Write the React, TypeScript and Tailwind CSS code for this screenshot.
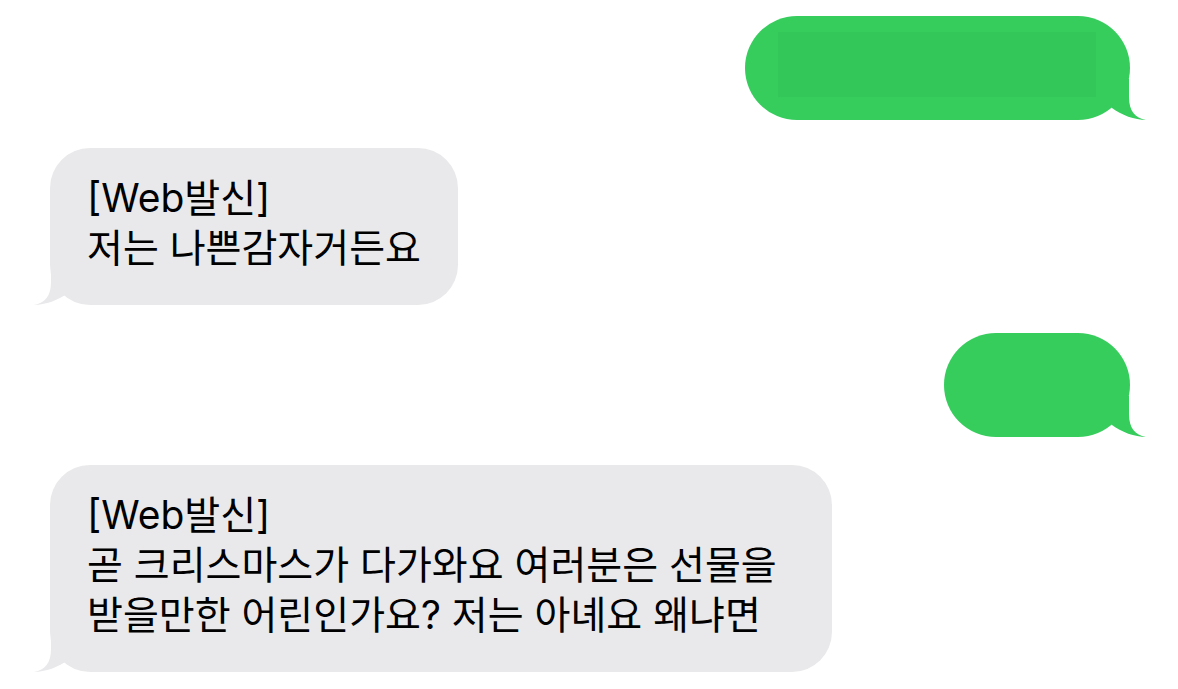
import React from 'react';

function Tail({ color, side }: { color: string; side: 'left' | 'right' }) {
  return (
    <svg
      width="58"
      height="43"
      viewBox="-40 -40 58 43"
      className={
        side === 'right'
          ? 'absolute right-[-17px] bottom-[-2px]'
          : 'absolute left-[-17px] bottom-[-2px] -scale-x-100'
      }
    >
      <path
        d="M-40,-40 H0 V-22 C0,-8 6,-1 17,1 C6,1 -8,-4 -17,-11 Z"
        fill={color}
      />
    </svg>
  );
}

function Sent({ width, children }: { width: string; children?: React.ReactNode }) {
  return (
    <div className={`relative self-end mr-[48px] h-[104px] rounded-[52px] bg-[#36cd5d] ${width}`}>
      <Tail color="#36cd5d" side="right" />
      {children}
    </div>
  );
}

function Received({ width, lines }: { width: string; lines: string[] }) {
  return (
    <div
      className={`relative self-start ml-[50px] rounded-[40px] bg-[#e9e9eb] pl-[37px] pt-[25px] pb-[32px] text-[39px] leading-[50px] text-black ${width}`}
    >
      <Tail color="#e9e9eb" side="left" />
      <div className="relative">
        {lines.map((l, i) => (
          <div key={i} className="whitespace-nowrap">
            {l}
          </div>
        ))}
      </div>
    </div>
  );
}

export default function App() {
  return (
    <div
      className="min-h-screen bg-white pt-[16px] flex flex-col gap-[28px]"
      style={{ fontFamily: 'Inter, "Noto Sans CJK KR", sans-serif' }}
    >
      <Sent width="w-[385px]">
        <div className="absolute left-[33px] top-[16px] w-[318px] h-[65px] bg-[#33c759]" />
      </Sent>
      <Received width="w-[408px]" lines={['[Web발신]', '저는 나쁜감자거든요']} />
      <Sent width="w-[186px]" />
      <Received
        width="w-[782px]"
        lines={[
          '[Web발신]',
          '곧 크리스마스가 다가와요 여러분은 선물을',
          '받을만한 어린인가요? 저는 아녜요 왜냐면',
        ]}
      />
    </div>
  );
}
